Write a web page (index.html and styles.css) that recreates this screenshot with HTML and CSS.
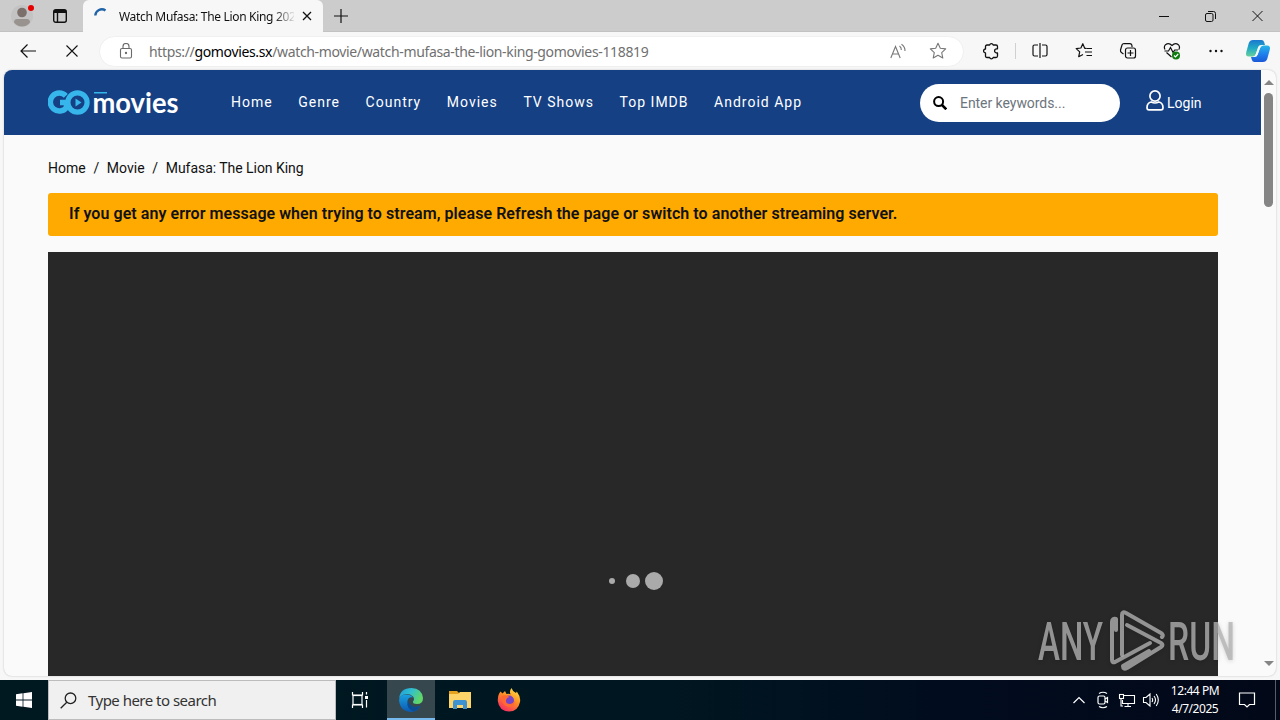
FILE: index.html
```html
<!DOCTYPE html>
<html lang="en">
<head>
  <meta charset="UTF-8">
  <title>Watch Mufasa: The Lion King 2024</title>
  <link rel="stylesheet" href="styles.css">
</head>
<body>

<!-- Tab strip -->
<div class="tabbar">
  <svg class="profile" width="28" height="32" viewBox="0 0 28 32">
    <circle cx="14" cy="16" r="11" fill="#c3c3c3"/>
    <circle cx="14" cy="12.500" r="4.800" fill="#7b706b"/>
    <path d="M6 22.500q0-3.500 3-3.500h10q3 0 3 3.500q-3 4-8 4t-8-4z" fill="#99938f"/>
    <circle cx="23" cy="8" r="3" fill="#e60000"/>
  </svg>
  <svg class="workspace" width="16" height="16" viewBox="0 0 16 16" fill="none" stroke="#111" stroke-width="1.400">
    <rect x="1.700" y="1.700" width="12.600" height="12.600" rx="2"/>
    <path d="M2 3.500h12" stroke-width="3"/>
    <path d="M5.500 4v10"/>
  </svg>
  <div class="tab">
    <svg width="14" height="16" viewBox="0 0 14 16" fill="none">
      <path d="M1.300 7.500A6.500 6.500 0 0 1 11.500 2.500" stroke="#1f63a8" stroke-width="2.400"/>
    </svg>
    <span class="tab-title">Watch Mufasa: The Lion King 202</span>
    <svg class="tab-close" width="10" height="10" viewBox="0 0 10 10" stroke="#111" stroke-width="1.300"><path d="M1 1l8 8M9 1l-8 8"/></svg>
  </div>
  <svg class="new-tab" width="14" height="14" viewBox="0 0 14 14" stroke="#111" stroke-width="1.200"><path d="M7 0v14M0 7h14"/></svg>
  <div class="window-buttons">
    <svg width="10" height="12" viewBox="0 0 10 12" stroke="#111"><path d="M0 6.500h10"/></svg>
    <svg width="11" height="12" viewBox="0 0 11 12" fill="none" stroke="#111"><rect x=".5" y="3.500" width="7.500" height="8" rx="1.500"/><path d="M3 1.500h5.500q2 0 2 2V9"/></svg>
    <svg width="11" height="12" viewBox="0 0 11 12" stroke="#111"><path d="M.5 1l10 10M10.500 1l-10 10"/></svg>
  </div>
</div>

<!-- Address bar -->
<div class="toolbar">
  <svg class="back" width="16" height="14" viewBox="0 0 16 14" fill="none" stroke="#111" stroke-width="1.200"><path d="M16 7H1M7.500.5L1 7l6.500 6.500"/></svg>
  <svg class="stop" width="12" height="12" viewBox="0 0 12 12" stroke="#111" stroke-width="1.100"><path d="M.5.5l11 11M11.500.5l-11 11"/></svg>
  <div class="address">
    <svg width="14" height="16" viewBox="0 0 14 16" fill="none" stroke="#6a6a6a" stroke-width="1.100"><rect x="1.500" y="5.500" width="11" height="9.500" rx="1.500"/><path d="M4 5.500V3.500a3 3 0 0 1 6 0v2"/><circle cx="7" cy="10" r=".6" fill="#6a6a6a"/></svg>
    <span class="url">https://<b>gomovies.sx</b>/watch-movie/watch-mufasa-the-lion-king-gomovies-118819</span>
    <svg class="read" width="17" height="16" viewBox="0 0 17 16" fill="none" stroke="#777" stroke-width="1.100"><path d="M.8 15L5.500 3.500 10.200 15M2.500 11h6M9.500 3q2 1.500 1.800 4M11.500 1.200q3.700 2.500 3.500 6.800"/></svg>
    <svg class="fav" width="18" height="18" viewBox="0 0 18 18" fill="none" stroke="#777" stroke-width="1.100" stroke-linejoin="round"><path d="M9 1.300l2.300 5 5.400.6-4 3.700 1.100 5.400L9 13.300 4.200 16l1.100-5.400-4-3.700 5.400-.6z"/></svg>
  </div>
  <div class="tools">
    <svg class="puzzle" width="18" height="18" viewBox="0 0 18 18" fill="none" stroke="#111" stroke-width="1.300" stroke-linejoin="round"><path d="M5 3h2.600a1.900 1.900 0 0 1 3.600 0H14q1.500 0 1.500 1.500v2.300h-.8a2.100 2.100 0 0 0 0 4.200h.8v3q0 1.500-1.500 1.500h-2.800a1.900 1.900 0 0 1-3.600 0H5q-1.500 0-1.500-1.500v-3.200a1.900 1.900 0 0 1 0-3.800V4.500Q3.500 3 5 3z"/></svg>
    <span class="sep"></span>
    <svg class="split" width="18" height="18" viewBox="0 0 18 18" fill="none" stroke="#111" stroke-width="1.200"><path d="M7 3H3.500Q2 3 2 4.500v8Q2 14 3.500 14H7M11 3h3.500Q16 3 16 4.500v8q0 1.500-1.500 1.500H11M9 1v15"/></svg>
    <svg width="18" height="18" viewBox="0 0 18 18" fill="none" stroke="#111" stroke-width="1.200" stroke-linejoin="round"><path d="M11.300 6.300H9.700L7.800 1.700 5.900 6l-4.700.6 3.500 3.300-1 4.800 4.300-2.200M11.500 6.500H17M10 10h7M11.500 13.500H17"/></svg>
    <svg width="18" height="18" viewBox="0 0 18 18" fill="none" stroke="#111" stroke-width="1.200"><rect x="6.500" y="6" width="10" height="10" rx="2"/><path d="M11.500 8v6M8.500 11h6M13 5V3.800Q13 2 11 1.700L5 1.500Q3.500 1.500 3 3L1.500 8q-.3 2 1.200 2.800L4.500 12"/></svg>
    <svg width="18" height="18" viewBox="0 0 18 18" fill="none" stroke="#111" stroke-width="1.200"><path d="M2 7.500Q.5 4.800 2.500 2.700 5.800.2 9 3.500q3.200-3.300 6.300-.8Q17.500 5 15.700 7.800M3.500 10.500L8.500 15M1.500 9h4L7.500 5.500l2.600 5L11.700 8H15"/><circle cx="13" cy="13.500" r="4" fill="#107c10" stroke="none"/><path d="M11 13.500l1.500 1.500 2.700-3" stroke="#fff"/></svg>
    <svg width="18" height="18" viewBox="0 0 18 18" fill="#111"><circle cx="3.500" cy="9" r="1.200"/><circle cx="9" cy="9" r="1.200"/><circle cx="14.500" cy="9" r="1.200"/></svg>
  </div>
  <svg class="copilot" width="26" height="24" viewBox="0 0 26 24">
    <defs>
      <linearGradient id="cpA" x1="0" y1="0" x2="0" y2="1"><stop offset="0" stop-color="#1b78cf"/><stop offset=".5" stop-color="#20abc5"/><stop offset="1" stop-color="#68cf9b"/></linearGradient>
      <linearGradient id="cpB" x1="0" y1="0" x2="0" y2="1"><stop offset="0" stop-color="#25b5e8"/><stop offset=".5" stop-color="#1f83ed"/><stop offset="1" stop-color="#1b58d8"/></linearGradient>
    </defs>
    <path d="M8 1h8.500q2 0 2.700 2.200L20 6h-3.500q-2.500 0-3.300 2.500L11 15q-.8 2.500-3.300 2.500H4Q0 17.500 1.300 13l2.500-9Q4.900 1 8 1z" fill="url(#cpA)"/>
    <path d="M18 23H9.500q-2 0-2.700-2.200L6 18h3.500q2.500 0 3.300-2.500L15 9q.8-2.500 3.300-2.500H22q4 0 2.700 4.500l-2.500 9Q21.100 23 18 23z" fill="url(#cpB)"/>
    <path d="M14.500 6.500h3.800Q16 6.800 15 9l-2.500 6.500q-.8 2-2.600 2H8q2-.5 2.800-2.500L13 8.500q.5-1.500 1.500-2z" fill="#f5faff"/>
  </svg>
</div>

<!-- Web page -->
<div class="viewport">
  <div class="page">
    <div class="header">
      <svg class="logo" width="136" height="36" viewBox="0 -3 136 36">
        <path d="M17.800 7.800A9 9 0 1 0 18.500 19.500V14.500H12" fill="none" stroke="#37b6eb" stroke-width="5.500"/>
        <circle cx="29.500" cy="14.500" r="9.600" fill="none" stroke="#37b6eb" stroke-width="5.200"/>
        <path d="M27.500 10.500l6 4-6 4z" fill="#37b6eb"/>
        <rect x="46" y="4" width="13" height="1.500" fill="#37b6eb"/>
        <text class="logo-text" x="44.500" y="25" textLength="86" lengthAdjust="spacingAndGlyphs">movies</text>
      </svg>
      <div class="nav">
        <a>Home</a>
        <a>Genre</a>
        <a>Country</a>
        <a>Movies</a>
        <a>TV Shows</a>
        <a>Top IMDB</a>
        <a>Android App</a>
      </div>
      <div class="search">
        <svg width="14" height="14" viewBox="0 0 14 14" fill="none" stroke="#000"><circle cx="5.600" cy="5.600" r="4.500" stroke-width="2"/><path d="M9 9l4.300 4.300" stroke-width="2.600"/></svg>
        <span>Enter keywords...</span>
      </div>
      <div class="login">
        <svg width="18" height="21" viewBox="0 0 18 21" fill="none" stroke="#fff" stroke-width="1.700"><circle cx="9" cy="6" r="5.100"/><path d="M5.200 12Q1 13 1 17.500q0 2.400 2 2.400h12q2 0 2-2.400Q17 13 12.800 12q-3.800 2-7.600 0z"/></svg>
        <span>Login</span>
      </div>
    </div>

    <div class="content">
      <div class="breadcrumb">
        <span>Home</span><i>/</i><span>Movie</span><i>/</i><span class="current">Mufasa: The Lion King</span>
      </div>
      <div class="alert">If you get any error message when trying to stream, please Refresh the page or switch to another streaming server.</div>
      <div class="player">
        <div class="loading">
          <span class="dot small"></span>
          <span class="dot medium"></span>
          <span class="dot large"></span>
        </div>
      </div>
    </div>
  </div>
  <div class="scrollbar">
    <span class="arrow-up"></span>
    <span class="thumb"></span>
    <span class="arrow-down"></span>
  </div>
</div>

<!-- Watermark over the page -->
<svg class="watermark" width="216" height="72" viewBox="0 0 216 72">
  <g class="mark-text">
    <text x="8" y="54" textLength="65" lengthAdjust="spacingAndGlyphs">ANY</text>
    <text x="138" y="54" textLength="67" lengthAdjust="spacingAndGlyphs">RUN</text>
  </g>
  <g fill="none" stroke="#b2b2b2" stroke-opacity=".78" stroke-width="4" stroke-linejoin="round" stroke-linecap="round">
    <path d="M86 24V13q-4-1-4 3v38q0 3 3 2l35-19"/>
    <path d="M92 49V9q0-4 4-2l35 20q3 2 1 4"/>
    <path d="M97 19l34 18q3 2 0 4L97 62q-4 2-4-2l26-15"/>
  </g>
</svg>

<!-- Taskbar -->
<div class="taskbar">
  <div class="start">
    <svg width="16" height="16" viewBox="0 0 16 16" fill="#fff"><path d="M0 2.200L6.600 1.300V7.500H0zM7.400 1.200L16 0v7.500H7.400zM0 8.400h6.600v6.300L0 13.800zM7.400 8.400H16V16l-8.600-1.200z"/></svg>
  </div>
  <div class="task-search">
    <svg width="17" height="17" viewBox="0 0 17 17" fill="none" stroke="#222" stroke-width="1.300"><circle cx="10.500" cy="6.300" r="5.300"/><path d="M6.800 10.200L.7 16.300"/></svg>
    <span>Type here to search</span>
  </div>
  <div class="task-icon">
    <svg width="18" height="18" viewBox="0 0 18 18" fill="none" stroke="#fff" stroke-width="1.200"><path d="M1.500 1v3h10V1M1.500 17v-3h10v3M15.500 1v2.500M15.500 9v7.500"/><rect x="2" y="4.500" width="9" height="9"/><path d="M14 6.500h3" stroke-width="3"/></svg>
  </div>
  <div class="task-icon active">
    <svg width="24" height="24" viewBox="0 0 24 24">
      <defs>
        <linearGradient id="edA" x1="0" y1="0" x2="1" y2=".4"><stop offset="0" stop-color="#1c9bd8"/><stop offset=".5" stop-color="#30bfd0"/><stop offset="1" stop-color="#61d669"/></linearGradient>
        <linearGradient id="edB" x1="0" y1="0" x2="0" y2="1"><stop offset="0" stop-color="#1aa1e1"/><stop offset="1" stop-color="#0b58af"/></linearGradient>
      </defs>
      <path d="M0 11Q1 0 12.500 0 23 .5 24 10q0 6-6 6-4.500 0-4-2.500 2-2.500 0-5Q10 5 5 6.500 1 8 0 11z" fill="url(#edA)"/>
      <path d="M0 12Q1 6.500 7 6.500q5 0 7 3-5-1-5.500 4Q9 19 16 19q3 0 5.500-1.200Q18.500 24 12 24 1 23.500 0 12z" fill="url(#edB)"/>
      <path d="M9 12q-3 9 6 11.300 4-1 6.500-5.500-6 2.500-9.500-.5-3-2.300-3-5.300z" fill="#0d4b91"/>
    </svg>
  </div>
  <div class="task-icon">
    <svg width="22" height="20" viewBox="0 0 22 20">
      <path d="M0 1h8l2 2h12v15H0z" fill="#e5a21f"/>
      <path d="M0 4h9l2-2h11v16H0z" fill="#fed469"/>
      <path d="M4 19v-7q0-2 2-2h10q2 0 2 2v7h-4v-4H8v4z" fill="#3d93d2"/>
    </svg>
  </div>
  <div class="task-icon">
    <svg width="24" height="24" viewBox="0 0 24 24">
      <defs>
        <linearGradient id="ffA" x1=".8" y1="0" x2=".2" y2="1"><stop offset="0" stop-color="#ffe143"/><stop offset=".45" stop-color="#ff8b24"/><stop offset="1" stop-color="#f5246a"/></linearGradient>
      </defs>
      <path d="M3.500 3.500l2 2L8 3l1.500 3q2.500-.5 4 .2Q12 3 14.500 0q1 3.500 4.500 5l.8-1.500Q24 9 23 14q-2 9.500-11 9.500Q2 23 .8 13 .5 7 3.500 3.500z" fill="url(#ffA)"/>
      <circle cx="12" cy="12.500" r="5" fill="#7644c8"/>
      <path d="M4.500 8q5-2 8 1-3 .5-3.500 3-.5 4 4 4 3.500-.5 4.500-3.500Q18 19 12 19q-7-.5-7.500-11z" fill="#ff6932"/>
    </svg>
  </div>
  <div class="tray">
    <svg width="12" height="18" viewBox="0 0 12 18" fill="none" stroke="#fff" stroke-width="1.200"><path d="M.5 12L6 6.500l5.500 5.500"/></svg>
    <svg class="camera" width="12" height="18" viewBox="0 0 12 18" fill="none" stroke="#fff" stroke-width="1.200"><rect x="1" y="5" width="7" height="8" rx="1.500"/><path d="M8 8l2.500-1.500v5L8 10M2 2.500Q6 0 10 2.500M2 15.500q4 2.500 8 0"/></svg>
    <svg width="18" height="18" viewBox="0 0 18 18" fill="none" stroke="#fff" stroke-width="1.100"><path d="M6 4.500h10.500v8H4.500V9M10 12.500v3M6.500 15.500H13M3 7v8h2"/><rect x="1.500" y="3.500" width="4" height="4"/></svg>
    <svg class="volume" width="18" height="18" viewBox="0 0 18 18" fill="none" stroke="#fff" stroke-width="1.100"><path d="M1.500 6.500H4l4-3.500v12l-4-3.500H1.500zM10 7q1.300 2 0 4M12 5q3 4 0 8M14.200 3q4.200 6 0 12"/></svg>
  </div>
  <div class="clock">
    <div>12:44 PM</div>
    <div>4/7/2025</div>
  </div>
  <svg class="notice" width="18" height="18" viewBox="0 0 18 18" fill="none" stroke="#fff" stroke-width="1.200"><path d="M1.500 2h15v11.500h-5L9 16l-2.500-2.500h-5z"/></svg>
  <span class="show-desktop"></span>
</div>

</body>
</html>
```

FILE: styles.css
```css
* {
  box-sizing: border-box;
}

body {
  margin: 0;
  width: 1280px;
  height: 720px;
  overflow: hidden;
  background: #f7f7f7;
  font-family: "Noto Sans", "Open Sans", sans-serif;
  color: #111;
}

svg {
  display: block;
  flex-shrink: 0;
}

/* Tab strip */
.tabbar {
  display: flex;
  align-items: center;
  height: 32px;
  background: #ccc;
  border-bottom: 1px solid #c2c2c2;
}

.profile {
  margin-left: 8px;
}

.workspace {
  margin-left: 16px;
}

.tab {
  display: flex;
  align-items: center;
  align-self: flex-start;
  width: 240px;
  height: 32px;
  margin-left: 15px;
  padding-left: 11px;
  background: #f7f7f7;
  border-radius: 6px 6px 0 0;
}

.tab-title {
  width: 175px;
  margin-left: 11px;
  white-space: nowrap;
  font-size: 12px;
  letter-spacing: -0.32px;
  -webkit-mask-image: linear-gradient(90deg, #000 155px, transparent 177px);
  mask-image: linear-gradient(90deg, #000 155px, transparent 177px);
}

.tab-close {
  margin-left: 8px;
}

.new-tab {
  margin-left: 11px;
}

.window-buttons {
  display: flex;
  gap: 36px;
  margin-left: auto;
  margin-right: 17px;
}

/* Address bar */
.toolbar {
  display: flex;
  align-items: center;
  height: 38px;
  background: #f7f7f7;
}

.back {
  margin-left: 20px;
}

.stop {
  margin-left: 30px;
}

.address {
  display: flex;
  align-items: center;
  width: 865px;
  height: 31px;
  margin-left: 21px;
  padding: 0 16px 0 19px;
  background: #fff;
  border: 1px solid #f0f0f0;
  border-radius: 16px;
}

.url {
  margin-left: 16px;
  font-size: 14px;
  letter-spacing: -0.35px;
  color: #707070;
  white-space: nowrap;
}

.url b {
  font-weight: normal;
  color: #000;
}

.read {
  margin-left: auto;
}

.fav {
  margin-left: 22px;
}

.tools {
  display: flex;
  align-items: center;
  gap: 26px;
  margin-left: 18px;
}

.sep {
  width: 1px;
  height: 16px;
  margin-left: -11px;
  background: #d0d0d0;
}

.split {
  margin-left: -11px;
}

.copilot {
  margin-left: 20px;
}

/* Web page */
.viewport {
  display: flex;
  width: 1272px;
  height: 606px;
  margin: 0 4px 4px;
  overflow: hidden;
  background: #fafafa;
  border-radius: 8px;
  box-shadow: 0 0 2px #bbb;
}

.page {
  width: 1257px;
  font-family: Roboto, sans-serif;
}

.header {
  display: flex;
  align-items: center;
  height: 65px;
  padding-left: 44px;
  background: #154084;
  color: #fff;
}

.logo-text {
  font-family: Lato, sans-serif;
  font-size: 28px;
  font-weight: 700;
  fill: #fff;
}

.nav {
  display: flex;
  gap: 25.6px;
  width: 689px;
  margin-left: 47px;
  margin-top: -2px;
  font-size: 14px;
  letter-spacing: 1px;
  white-space: nowrap;
}

.search {
  display: flex;
  align-items: center;
  gap: 13px;
  width: 200px;
  height: 38px;
  padding-left: 13px;
  background: #fff;
  border-radius: 19px;
  font-size: 14px;
  letter-spacing: -0.05px;
  color: #6c757d;
}

.login {
  display: flex;
  align-items: center;
  gap: 3px;
  margin-left: 26px;
  font-size: 14px;
}

.login svg {
  margin-top: -4px;
}

.content {
  width: 1170px;
  margin-left: 44px;
}

.breadcrumb {
  display: flex;
  gap: 7.7px;
  padding: 25px 0 16px;
  font-size: 14px;
  line-height: 17px;
}

.breadcrumb i {
  font-style: normal;
}

.current {
  letter-spacing: -0.04px;
}

.alert {
  height: 43px;
  padding: 0 21px;
  background: #fa0;
  border-radius: 3px;
  font-size: 16px;
  font-weight: 600;
  line-height: 41px;
  letter-spacing: 0.06px;
}

.player {
  height: 424px;
  margin-top: 16px;
  padding-top: 319px;
  background: #282828;
}

.loading {
  display: flex;
  align-items: center;
  height: 20px;
  margin-left: 561px;
}

.dot {
  border-radius: 50%;
  background: #aaa;
}

.small {
  width: 6px;
  height: 6px;
}

.medium {
  width: 14px;
  height: 14px;
  margin-left: 11px;
}

.large {
  width: 18px;
  height: 18px;
  margin-left: 5px;
}

.scrollbar {
  display: flex;
  flex-direction: column;
  align-items: center;
  width: 15px;
  padding: 10px 0;
}

.arrow-up {
  border: 5px solid transparent;
  border-top: 0;
  border-bottom: 5px solid #858585;
}

.thumb {
  width: 9px;
  height: 114px;
  margin-top: 8px;
  border-radius: 5px;
  background: #858585;
}

.arrow-down {
  margin-top: auto;
  border: 5px solid transparent;
  border-bottom: 0;
  border-top: 5px solid #858585;
}

.watermark {
  position: absolute;
  left: 1030px;
  top: 606px;
  filter: drop-shadow(0 1px 2px rgba(0, 0, 0, 0.2));
}

.mark-text {
  font-family: Roboto, sans-serif;
  font-size: 53px;
  font-weight: 500;
  fill: #b2b2b2;
  fill-opacity: 0.78;
}

/* Taskbar */
.taskbar {
  display: flex;
  align-items: center;
  height: 40px;
  background: linear-gradient(90deg, #001820 0%, #001721 50%, #010c1e 75%, #020818 100%);
  color: #fff;
}

.start {
  display: flex;
  justify-content: center;
  width: 48px;
}

.task-search {
  display: flex;
  align-items: center;
  gap: 11px;
  width: 288px;
  height: 40px;
  padding-left: 11px;
  background: #f0f0f0;
  border: 1px solid #bcbcbc;
  font-size: 15px;
  letter-spacing: -0.52px;
  color: #333;
}

.task-icon {
  display: flex;
  align-items: center;
  justify-content: center;
  width: 48px;
  height: 40px;
  margin-right: 1px;
}

.task-search + .task-icon {
  margin-right: 3px;
}

.active {
  padding-top: 2px;
  background: #36474e;
  border-bottom: 2px solid #76b9ed;
}

.tray {
  display: flex;
  gap: 9px;
  margin-left: auto;
}

.camera {
  margin-left: 3px;
}

.volume {
  margin-left: -3px;
}

.clock {
  width: 54px;
  margin-left: 8px;
  font-size: 12px;
  line-height: 18px;
  letter-spacing: -0.45px;
  text-align: center;
  white-space: nowrap;
}

.notice {
  margin-left: 16px;
}

.show-desktop {
  width: 1px;
  height: 40px;
  margin-left: 19px;
  margin-right: 4px;
  background: #555d68;
}
```
